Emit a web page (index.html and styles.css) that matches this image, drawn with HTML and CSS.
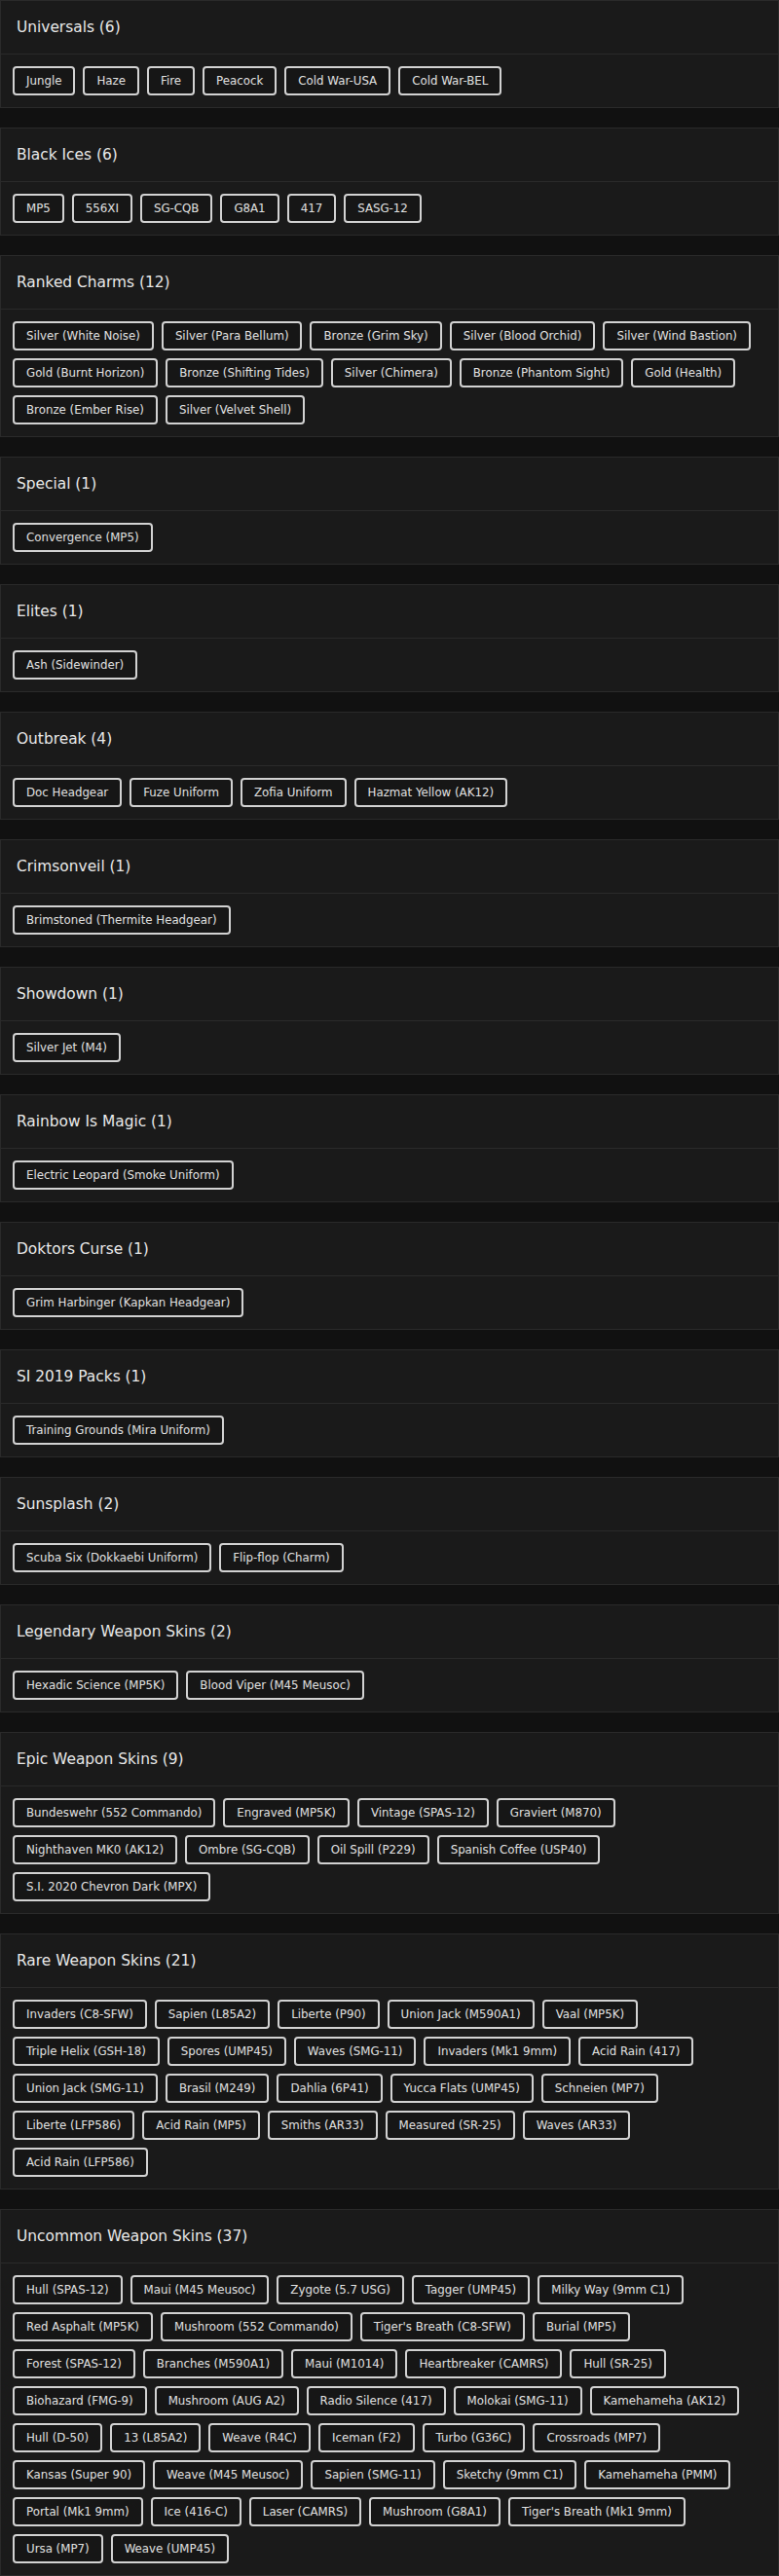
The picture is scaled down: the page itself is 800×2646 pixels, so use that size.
FILE: index.html
```html
<!DOCTYPE html>
<html lang="en">
<head>
  <meta charset="UTF-8">
  <meta name="viewport" content="width=device-width, initial-scale=1.0">
  <title>Inventory | Collection</title>
  <link rel="stylesheet" href="styles.css">
</head>
<body>
  <div class="collection" id="collection"></div>
  <script>
    // Item groups shown on the page
    const groups = [
      ['Universals', ['Jungle', 'Haze', 'Fire', 'Peacock', 'Cold War-USA', 'Cold War-BEL']],
      ['Black Ices', ['MP5', '556XI', 'SG-CQB', 'G8A1', '417', 'SASG-12']],
      ['Ranked Charms', [
        'Silver (White Noise)', 'Silver (Para Bellum)', 'Bronze (Grim Sky)', 'Silver (Blood Orchid)',
        'Silver (Wind Bastion)', 'Gold (Burnt Horizon)', 'Bronze (Shifting Tides)', 'Silver (Chimera)',
        'Bronze (Phantom Sight)', 'Gold (Health)', 'Bronze (Ember Rise)', 'Silver (Velvet Shell)'
      ]],
      ['Special', ['Convergence (MP5)']],
      ['Elites', ['Ash (Sidewinder)']],
      ['Outbreak', ['Doc Headgear', 'Fuze Uniform', 'Zofia Uniform', 'Hazmat Yellow (AK12)']],
      ['Crimsonveil', ['Brimstoned (Thermite Headgear)']],
      ['Showdown', ['Silver Jet (M4)']],
      ['Rainbow Is Magic', ['Electric Leopard (Smoke Uniform)']],
      ['Doktors Curse', ['Grim Harbinger (Kapkan Headgear)']],
      ['SI 2019 Packs', ['Training Grounds (Mira Uniform)']],
      ['Sunsplash', ['Scuba Six (Dokkaebi Uniform)', 'Flip-flop (Charm)']],
      ['Legendary Weapon Skins', ['Hexadic Science (MP5K)', 'Blood Viper (M45 Meusoc)']],
      ['Epic Weapon Skins', [
        'Bundeswehr (552 Commando)', 'Engraved (MP5K)', 'Vintage (SPAS-12)', 'Graviert (M870)',
        'Nighthaven MK0 (AK12)', 'Ombre (SG-CQB)', 'Oil Spill (P229)', 'Spanish Coffee (USP40)',
        'S.I. 2020 Chevron Dark (MPX)'
      ]],
      ['Rare Weapon Skins', [
        'Invaders (C8-SFW)', 'Sapien (L85A2)', 'Liberte (P90)', 'Union Jack (M590A1)', 'Vaal (MP5K)',
        'Triple Helix (GSH-18)', 'Spores (UMP45)', 'Waves (SMG-11)', 'Invaders (Mk1 9mm)', 'Acid Rain (417)',
        'Union Jack (SMG-11)', 'Brasil (M249)', 'Dahlia (6P41)', 'Yucca Flats (UMP45)', 'Schneien (MP7)',
        'Liberte (LFP586)', 'Acid Rain (MP5)', 'Smiths (AR33)', 'Measured (SR-25)', 'Waves (AR33)',
        'Acid Rain (LFP586)'
      ]],
      ['Uncommon Weapon Skins', [
        'Hull (SPAS-12)', 'Maui (M45 Meusoc)', 'Zygote (5.7 USG)', 'Tagger (UMP45)', 'Milky Way (9mm C1)',
        'Red Asphalt (MP5K)', 'Mushroom (552 Commando)', "Tiger's Breath (C8-SFW)", 'Burial (MP5)',
        'Forest (SPAS-12)', 'Branches (M590A1)', 'Maui (M1014)', 'Heartbreaker (CAMRS)', 'Hull (SR-25)',
        'Biohazard (FMG-9)', 'Mushroom (AUG A2)', 'Radio Silence (417)', 'Molokai (SMG-11)', 'Kamehameha (AK12)',
        'Hull (D-50)', '13 (L85A2)', 'Weave (R4C)', 'Iceman (F2)', 'Turbo (G36C)', 'Crossroads (MP7)',
        'Kansas (Super 90)', 'Weave (M45 Meusoc)', 'Sapien (SMG-11)', 'Sketchy (9mm C1)', 'Kamehameha (PMM)',
        'Portal (Mk1 9mm)', 'Ice (416-C)', 'Laser (CAMRS)', 'Mushroom (G8A1)', "Tiger's Breath (Mk1 9mm)",
        'Ursa (MP7)', 'Weave (UMP45)'
      ]]
    ];

    const container = document.getElementById('collection');

    groups.forEach(([title, items]) => {
      const card = document.createElement('section');
      card.className = 'card';

      const header = document.createElement('div');
      header.className = 'card-header';
      header.textContent = `${title} (${items.length})`;
      card.appendChild(header);

      const body = document.createElement('div');
      body.className = 'card-body';
      items.forEach(name => {
        const chip = document.createElement('span');
        chip.className = 'chip';
        chip.textContent = name;
        body.appendChild(chip);
      });
      card.appendChild(body);

      container.appendChild(card);
    });
  </script>
</body>
</html>
```

FILE: styles.css
```css
* {
  margin: 0;
  padding: 0;
  box-sizing: border-box;
}
body {
  background: #111111;
  font-family: "DejaVu Sans", "Noto Sans", sans-serif;
  color: #e2e2e2;
}
.collection {
  display: flex;
  flex-direction: column;
  gap: 20px;
}
.card {
  background: #1a1a1a;
  border: 1px solid #2a2a2a;
}
.card-header {
  height: 55px;
  display: flex;
  align-items: center;
  padding: 0 16px;
  border-bottom: 1px solid #2a2a2a;
  font-size: 15.4px;
  color: #e8e8e8;
}
.card-body {
  display: flex;
  flex-wrap: wrap;
  gap: 8px;
  padding: 12px 21px 12px 12px;
}
.chip {
  height: 30px;
  display: flex;
  align-items: center;
  padding: 0 12px;
  border: 2px solid #d2d2d2;
  border-radius: 4px;
  background: #161616;
  font-size: 11.8px;
  color: #e0e0e0;
  white-space: nowrap;
}
```
